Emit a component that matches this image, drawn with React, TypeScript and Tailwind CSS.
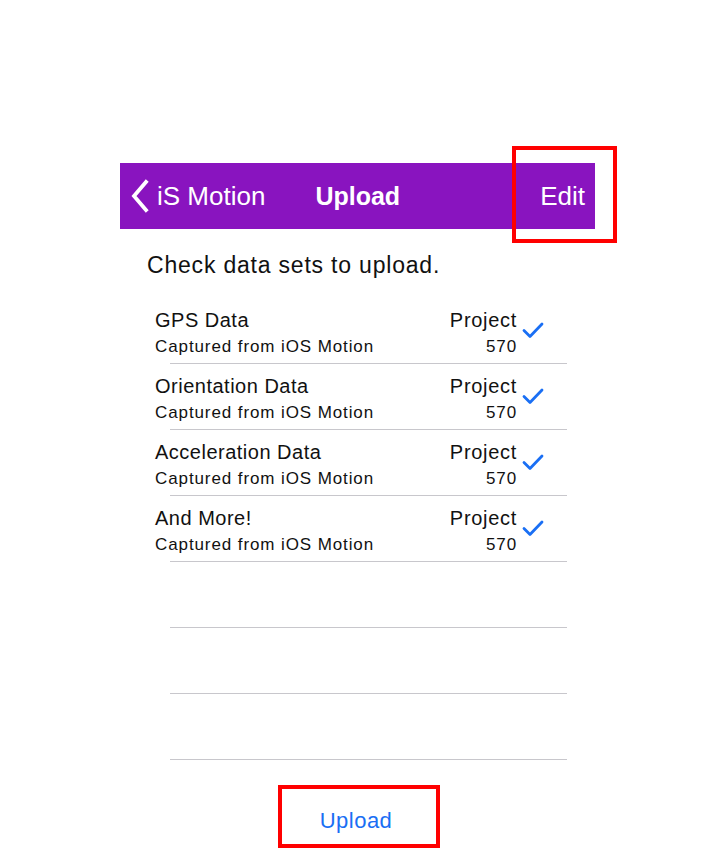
const rows = [
  { title: 'GPS Data' },
  { title: 'Orientation Data' },
  { title: 'Acceleration Data' },
  { title: 'And More!' },
];

function Check() {
  return (
    <svg width="22" height="18" viewBox="0 0 22 18" className="shrink-0">
      <path d="M2 9.5l6 6L20 3" fill="none" stroke="#1a6ff4" strokeWidth="2.8" strokeLinecap="round" strokeLinejoin="round" />
    </svg>
  );
}

export default function App() {
  return (
    <div className="relative w-[720px] h-[864px] bg-white overflow-hidden" style={{ fontFamily: '"Liberation Sans", Arial, sans-serif' }}>
      <div className="pt-[163px]">
        {/* nav bar */}
        <div className="ml-[120px] w-[475px] h-[66px] bg-[#8914bf] flex items-center text-white">
          <svg width="20" height="34" viewBox="0 0 20 34" className="ml-[10px]">
            <path d="M16 3L4 17l12 14" fill="none" stroke="white" strokeWidth="3.8" strokeLinecap="square" />
          </svg>
          <span className="ml-[7px] text-[26px] leading-none">iS Motion</span>
          <span className="ml-[50px] text-[25px] font-bold leading-none">Upload</span>
          <span className="ml-auto mr-[10px] text-[26px] leading-none">Edit</span>
        </div>

        <div className="ml-[147px] mt-[25px] text-[23px] leading-none tracking-[0.8px] text-[#111]">Check data sets to upload.</div>

        <div className="mt-[21px]">
          {rows.map((r) => (
            <div key={r.title} className="h-[66px] relative">
              <div className="flex items-start pl-[155px] pt-[12px]">
                <div className="flex-1">
                  <div className="text-[20px] leading-none tracking-[0.5px] text-[#111]">{r.title}</div>
                  <div className="mt-[8px] text-[17px] leading-none tracking-[0.9px] text-[#111]">Captured from iOS Motion</div>
                </div>
                <div className="text-right">
                  <div className="text-[20px] leading-none tracking-[0.7px] text-[#111]">Project</div>
                  <div className="mt-[8px] text-[17px] leading-none tracking-[0.9px] text-[#111]">570</div>
                </div>
                <div className="w-[203px] pl-[5px] pt-[11px]">
                  <Check />
                </div>
              </div>
              <div className="absolute bottom-0 left-[170px] w-[397px] h-px bg-[#c8c7cc]" />
            </div>
          ))}
          {[0, 1, 2].map((i) => (
            <div key={i} className="h-[66px] ml-[170px] w-[397px] border-b border-[#c8c7cc]" />
          ))}
        </div>

        <div className="mt-[50px] text-center w-[712px] text-[22px] leading-none tracking-[0.5px] text-[#1a6ff4]">Upload</div>
      </div>

      {/* annotation boxes */}
      <div className="absolute left-[512px] top-[146px] w-[105px] h-[97px] border-[4px] border-[#ff0000]" />
      <div className="absolute left-[278px] top-[785px] w-[162px] h-[63px] border-[4px] border-[#ff0000]" />
    </div>
  );
}
